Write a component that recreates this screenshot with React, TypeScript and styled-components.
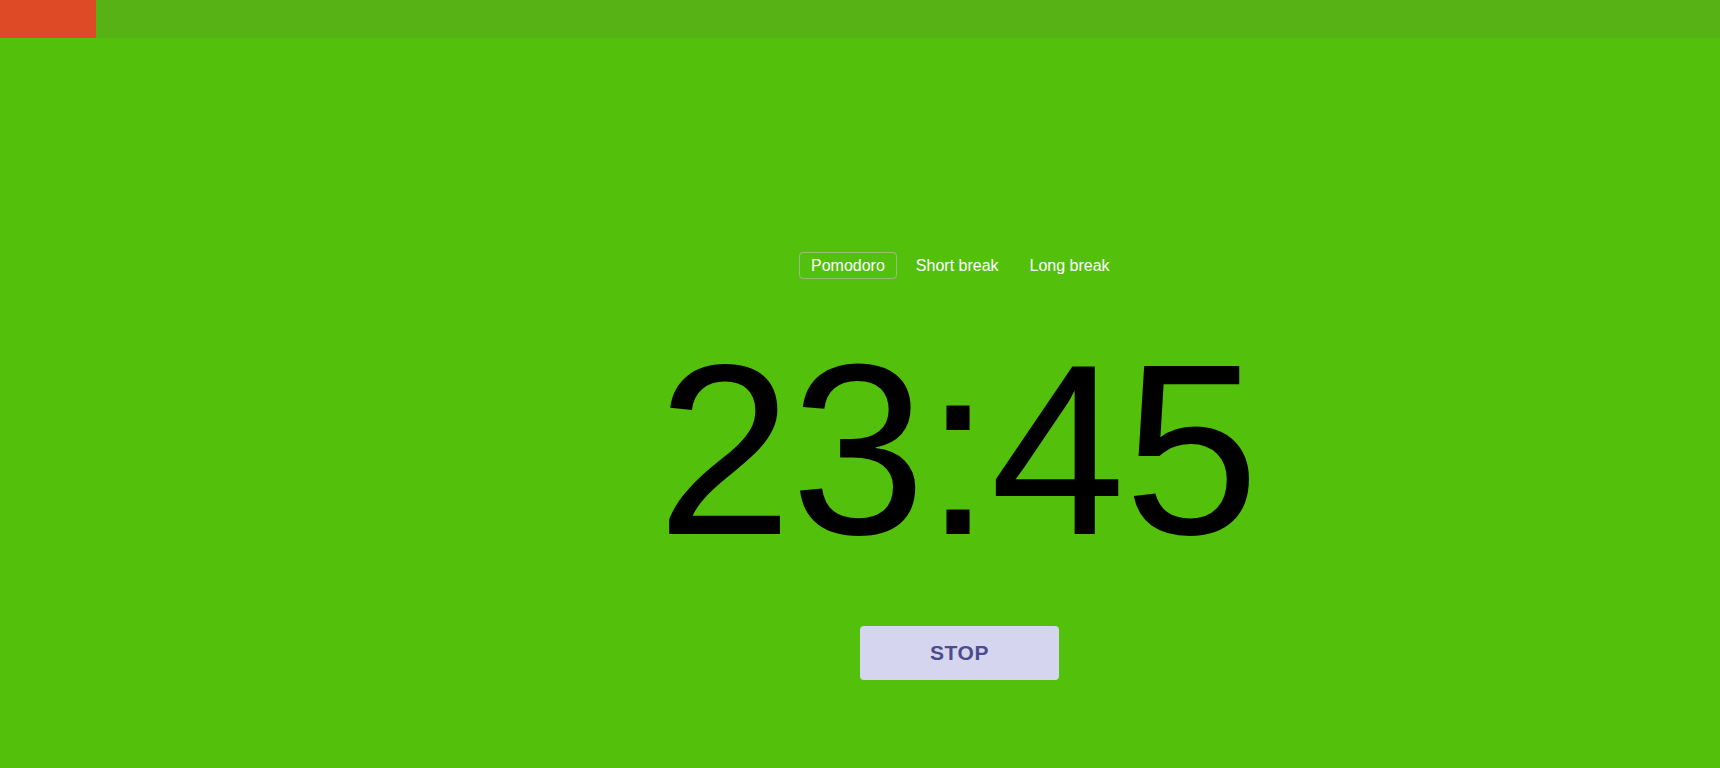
import React from "react";
import styled, { createGlobalStyle } from "styled-components";

const Global = createGlobalStyle`
  html, body { margin: 0; padding: 0; }
  body {
    background: #53c00c;
    font-family: "Liberation Sans", Arial, sans-serif;
    min-height: 768px;
    overflow: hidden;
  }
`;

const Page = styled.div`
  width: 1720px;
  height: 768px;
  background: #53c00c;
  display: flex;
  flex-direction: column;
`;

const ProgressTrack = styled.div`
  height: 38px;
  background: #57b315;
  display: flex;
`;

const ProgressFill = styled.div`
  height: 100%;
  background: #dd4a25;
`;

const Main = styled.main`
  display: flex;
  flex-direction: column;
  align-items: flex-start;
  padding-left: 657px;
`;

const Tabs = styled.nav<{ $indent: number; $top: number }>`
  display: flex;
  gap: 7px;
  margin-left: ${(p) => p.$indent}px;
  margin-top: ${(p) => p.$top}px;
`;

const Tab = styled.button<{ $active?: boolean }>`
  height: 27px;
  padding: 0 11px;
  border: 1px solid ${(p) => (p.$active ? "rgba(190,190,190,0.6)" : "transparent")};
  border-radius: 4px;
  background: transparent;
  color: #ffffff;
  font-family: "Liberation Sans", Arial, sans-serif;
  font-size: 16px;
  line-height: 25px;
  cursor: pointer;
`;

const Time = styled.div<{ $top: number }>`
  margin-top: ${(p) => p.$top}px;
  font-family: "Liberation Sans", Arial, sans-serif;
  font-size: 243px;
  line-height: 243px;
  letter-spacing: -1.5px;
  color: #000000;
`;

const StopButton = styled.button<{ $indent: number; $top: number }>`
  margin-left: ${(p) => p.$indent}px;
  margin-top: ${(p) => p.$top}px;
  width: 199px;
  height: 54px;
  border: none;
  border-radius: 4px;
  background: #d5d5f0;
  color: #4c4c8c;
  font-family: "Liberation Sans", Arial, sans-serif;
  font-weight: bold;
  font-size: 21px;
  letter-spacing: 0.5px;
  cursor: pointer;
`;

export default function App() {
  return (
    <Page>
      <Global />
      <ProgressTrack>
        <ProgressFill style={{ width: 96 }} />
      </ProgressTrack>
      <Main>
        <Tabs $indent={142} $top={214}>
          <Tab $active>Pomodoro</Tab>
          <Tab>Short break</Tab>
          <Tab>Long break</Tab>
        </Tabs>
        <Time $top={49}>23:45</Time>
        <StopButton $indent={203} $top={55}>STOP</StopButton>
      </Main>
    </Page>
  );
}
